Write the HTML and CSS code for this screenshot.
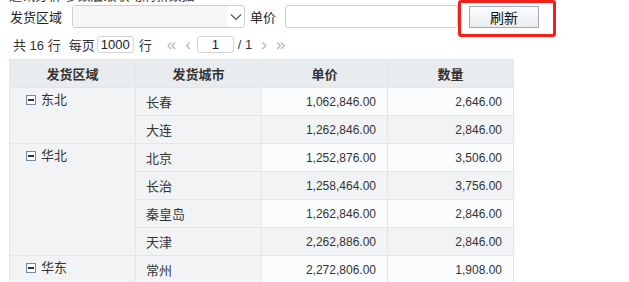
FILE: index.html
```html
<!DOCTYPE html>
<html lang="en">
<head>
    <meta charset="UTF-8">
    <title>发货数据</title>
    <link rel="stylesheet" href="styles.css">
</head>
<body>

    <div class="title">通讯分析 参数层级联动刷新数据</div>

    <!-- Filter row -->
    <div class="filter-row">
        <span class="label">发货区域</span>
        <div class="select-box">
            <div class="select-value"></div>
            <svg class="chevron" width="12" height="8" viewBox="0 0 12 8"><path d="M1 1.5 L6 6.5 L11 1.5" fill="none" stroke="#555" stroke-width="1.2"/></svg>
        </div>
        <span class="label price-label">单价</span>
        <input class="text-input" type="text">
        <div class="button-wrap">
            <button class="refresh-btn">刷新</button>
            <div class="highlight"></div>
        </div>
    </div>

    <!-- Pager -->
    <div class="pager">
        <span>共 16 行</span>
        <span class="per-page">每页</span>
        <input class="small-input size-input" type="text" value="1000">
        <span>行</span>
        <span class="arrow first">&laquo;</span>
        <span class="arrow">&lsaquo;</span>
        <input class="small-input page-input" type="text" value="1">
        <span class="total">/ 1</span>
        <span class="arrow next">&rsaquo;</span>
        <span class="arrow">&raquo;</span>
    </div>

    <table class="report">
        <thead>
            <tr>
                <th>发货区域</th>
                <th>发货城市</th>
                <th>单价</th>
                <th>数量</th>
            </tr>
        </thead>
        <tbody>
            <tr class="odd">
                <td class="region" rowspan="2"><span class="fold"></span>东北</td>
                <td class="city">长春</td>
                <td class="num">1,062,846.00</td>
                <td class="num">2,646.00</td>
            </tr>
            <tr class="even">
                <td class="city">大连</td>
                <td class="num">1,262,846.00</td>
                <td class="num">2,846.00</td>
            </tr>
            <tr class="odd">
                <td class="region" rowspan="4"><span class="fold"></span>华北</td>
                <td class="city">北京</td>
                <td class="num">1,252,876.00</td>
                <td class="num">3,506.00</td>
            </tr>
            <tr class="even">
                <td class="city">长治</td>
                <td class="num">1,258,464.00</td>
                <td class="num">3,756.00</td>
            </tr>
            <tr class="odd">
                <td class="city">秦皇岛</td>
                <td class="num">1,262,846.00</td>
                <td class="num">2,846.00</td>
            </tr>
            <tr class="even">
                <td class="city">天津</td>
                <td class="num">2,262,886.00</td>
                <td class="num">2,846.00</td>
            </tr>
            <tr class="odd">
                <td class="region" rowspan="2"><span class="fold"></span>华东</td>
                <td class="city">常州</td>
                <td class="num">2,272,806.00</td>
                <td class="num">1,908.00</td>
            </tr>
            <tr class="even">
                <td class="city">上海</td>
                <td class="num">2,862,846.00</td>
                <td class="num">2,846.00</td>
            </tr>
        </tbody>
    </table>

</body>
</html>
```

FILE: styles.css
```css
html, body {
    overflow: hidden;
}

body {
    margin: 0;
    padding: 0 0 0 9px;
    font-family: "Liberation Sans", "Noto Sans CJK SC", sans-serif;
    font-size: 13px;
    color: #222;
    background-color: #fff;
}

/* Title is mostly scrolled off the top */
.title {
    height: 14px;
    line-height: 14px;
    margin-top: -11px;
    font-size: 13px;
    color: #333;
}

.filter-row {
    display: flex;
    align-items: center;
    height: 23px;
    margin-top: 2px;
}

.label {
    padding-left: 1px;
    font-size: 13px;
}

.select-box {
    display: flex;
    align-items: center;
    width: 171px;
    height: 21px;
    margin-left: 10px;
    border: 1px solid #cfcfcf;
    border-radius: 3px;
    background-color: #fff;
}

.select-value {
    flex: 1;
    height: 100%;
    background-color: #f6f6f6;
}

.chevron {
    margin: 0 2px 0 3px;
}

.price-label {
    margin-left: 4px;
}

.text-input {
    width: 173px;
    margin-left: 9px;
    padding: 0;
    border: 1px solid #cfcfcf;
    border-radius: 3px;
    box-sizing: border-box;
    height: 23px;
}

.button-wrap {
    position: relative;
    margin-left: 11px;
}

.refresh-btn {
    display: block;
    width: 70px;
    height: 22px;
    padding: 0;
    border: 1px solid #a3acb8;
    border-radius: 0;
    background: linear-gradient(#fdfdfd, #e9ecef);
    font-family: "Liberation Sans", "Noto Sans CJK SC", sans-serif;
    font-size: 14px;
    color: #111;
}

/* Red annotation box around the button */
.highlight {
    position: absolute;
    left: -11px;
    top: -6px;
    width: 92px;
    height: 31px;
    border: 3px solid #f0201a;
    border-radius: 3px;
}

.pager {
    display: flex;
    align-items: center;
    height: 20px;
    margin-top: 6px;
    padding-left: 4px;
    font-size: 13px;
    color: #333;
}

.per-page {
    margin-left: 8px;
}

.small-input {
    padding: 0;
    border: 1px solid #d4d4d4;
    border-radius: 3px;
    box-sizing: border-box;
    height: 17px;
    font-family: "Liberation Sans", sans-serif;
    font-size: 13px;
    text-align: center;
    color: #222;
}

.size-input {
    width: 37px;
    margin: 0 5px 0 2px;
}

.page-input {
    width: 37px;
    margin-left: 6px;
}

.arrow {
    margin-left: 9px;
    font-size: 17px;
    line-height: 17px;
    color: #b5b5b5;
}

.arrow.first {
    margin-left: 15px;
}

.arrow.next {
    margin-left: 9px;
}

.total {
    margin-left: 4px;
}

.report {
    margin-top: 5px;
    border-collapse: collapse;
    table-layout: fixed;
    width: 504px;
}

.report th,
.report td {
    width: 126px;
    height: 28px;
    padding: 0 10px;
    box-sizing: border-box;
    border: 1px solid #e2e5e9;
}

.report th {
    background-color: #e9ecef;
    font-weight: bold;
    font-size: 13px;
    color: #333;
    text-align: center;
}

.report td {
    background-color: #f1f3f5;
    color: #333;
}

.report tr.odd td.num {
    background-color: #fbfcfd;
}

.report td.num {
    text-align: right;
    padding-right: 11px;
    font-size: 12px;
}

.report td.region {
    vertical-align: top;
    padding: 1px 0 0 16px;
}

.fold {
    display: inline-block;
    position: relative;
    width: 8px;
    height: 8px;
    margin-right: 5px;
    border: 1px solid #6f8aab;
    background-color: #fff;
    vertical-align: -1px;
}

.fold::after {
    content: "";
    position: absolute;
    left: 1px;
    top: 3px;
    width: 6px;
    height: 2px;
    background-color: #333;
}
```
